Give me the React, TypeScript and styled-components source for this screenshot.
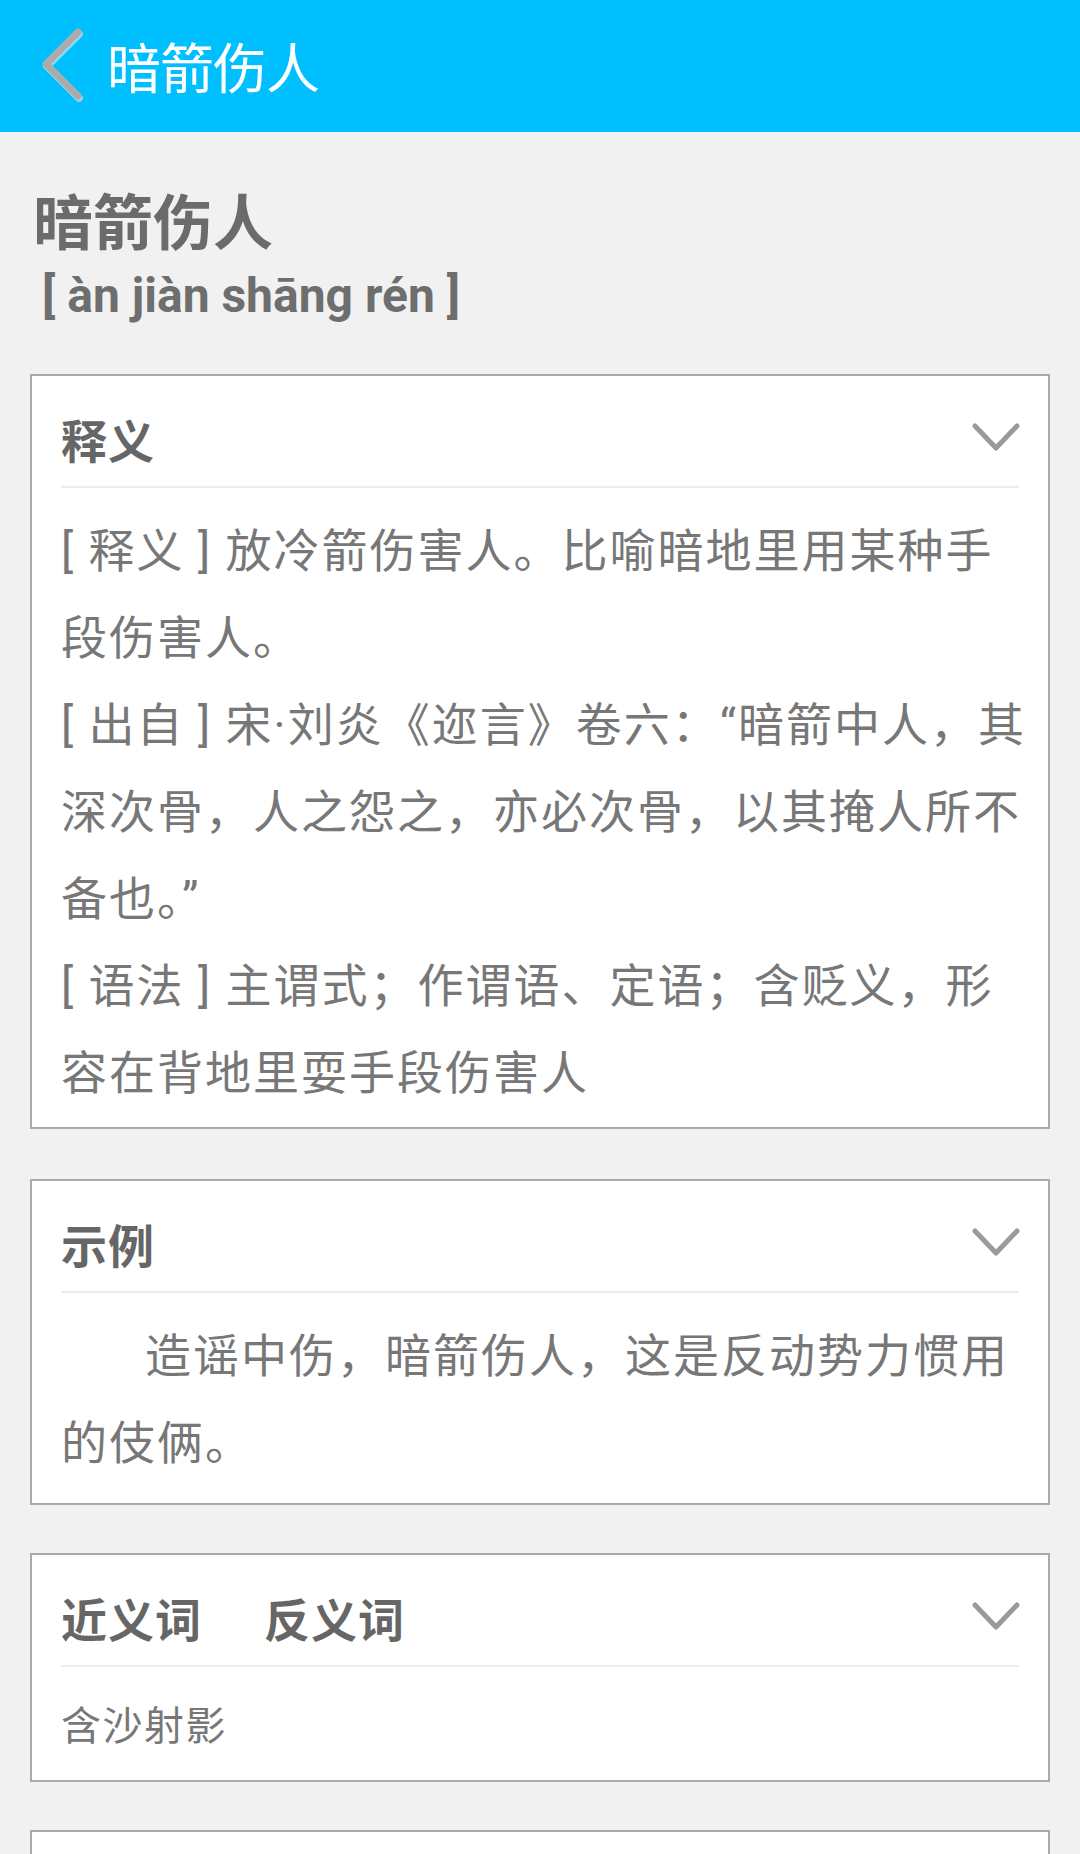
import React from "react";
import styled, { createGlobalStyle } from "styled-components";

const GlobalStyle = createGlobalStyle`
  html, body {
    margin: 0;
    padding: 0;
    background: #f1f1f1;
  }
  body {
    font-family: "Noto Sans CJK SC", "Noto Sans", sans-serif;
  }
`;

const TopBar = styled.header`
  height: 132px;
  background-color: #00bffe;
  display: flex;
  align-items: center;
  padding-left: 36px;
  gap: 21px;
`;

const BackIcon = styled.svg`
  width: 50px;
  height: 80px;
  flex-shrink: 0;
`;

const TopTitle = styled.h1`
  margin: 0;
  color: #fff;
  font-size: 54px;
  font-weight: normal;
  letter-spacing: -1px;
  line-height: 1;
`;

const Content = styled.main`
  padding: 0 30px 40px;
`;

const Intro = styled.div`
  padding: 50px 0 0 3px;
`;

const Word = styled.h2`
  margin: 0;
  color: #6b6b6b;
  font-size: 60px;
  font-weight: bold;
  line-height: 74px;
`;

const Pinyin = styled.div`
  margin: 12px 0 0 9px;
  color: #6e6e6e;
  font-family: Roboto, "Noto Sans", sans-serif;
  font-weight: bold;
  font-size: 48px;
  line-height: 56px;
`;

const Card = styled.section<{ $gap?: number }>`
  margin-top: ${(p) => p.$gap ?? 50}px;
  background: #fff;
  border: 2px solid #aaa;
`;

const CardHead = styled.div`
  margin: 14px 29px 0;
  height: 96px;
  display: flex;
  align-items: center;
  justify-content: space-between;
  border-bottom: 2px solid #ececec;
`;

const Tabs = styled.div`
  display: flex;
  gap: 62px;
`;

const CardTitle = styled.h3`
  margin: 0;
  color: #666;
  font-size: 46px;
  font-weight: bold;
  letter-spacing: 1px;
`;

const Chevron = styled.svg`
  width: 50px;
  height: 32px;
  margin-right: -3px;
`;

const CardBody = styled.div<{ $small?: boolean; $bottom?: number }>`
  padding: 20px 14px ${(p) => p.$bottom ?? 10}px 29px;
  color: #777;
  font-family: Roboto, "Noto Sans CJK SC", sans-serif;
  font-size: ${(p) => (p.$small ? "40px" : "46px")};
  letter-spacing: ${(p) => (p.$small ? "1.5px" : "2px")};
  line-height: ${(p) => (p.$small ? "80px" : "87px")};
`;

const Para = styled.p<{ $indent?: boolean }>`
  margin: 0;
  text-indent: ${(p) => (p.$indent ? "84px" : "0")};
`;

function DownArrow() {
  return (
    <Chevron viewBox="0 0 50 32">
      <polyline
        points="3,4 24,26 45,4"
        fill="none"
        stroke="#9a9a9a"
        strokeWidth="5"
        strokeLinecap="round"
        strokeLinejoin="round"
      />
    </Chevron>
  );
}

export default function App() {
  return (
    <>
      <GlobalStyle />
      <TopBar>
        <BackIcon viewBox="0 0 50 80">
          <polyline
            points="42,6 10,38 42,70"
            fill="none"
            stroke="#8fd6ee"
            strokeWidth="8"
            strokeLinecap="round"
            strokeLinejoin="round"
            transform="translate(1,2)"
          />
          <polyline
            points="42,6 10,38 42,70"
            fill="none"
            stroke="#ababab"
            strokeWidth="7"
            strokeLinecap="round"
            strokeLinejoin="round"
          />
        </BackIcon>
        <TopTitle>暗箭伤人</TopTitle>
      </TopBar>
      <Content>
        <Intro>
          <Word>暗箭伤人</Word>
          <Pinyin>[ àn jiàn shāng rén ]</Pinyin>
        </Intro>

        <Card>
          <CardHead>
            <CardTitle>释义</CardTitle>
            <DownArrow />
          </CardHead>
          <CardBody>
            <Para>[ 释义 ] 放冷箭伤害人。比喻暗地里用某种手段伤害人。</Para>
            <Para>[ 出自 ] 宋·刘炎《迩言》卷六：“暗箭中人，其深次骨，人之怨之，亦必次骨，以其掩人所不备也。”</Para>
            <Para>[ 语法 ] 主谓式；作谓语、定语；含贬义，形容在背地里耍手段伤害人</Para>
          </CardBody>
        </Card>

        <Card>
          <CardHead>
            <CardTitle>示例</CardTitle>
            <DownArrow />
          </CardHead>
          <CardBody $bottom={16}>
            <Para $indent>造谣中伤，暗箭伤人，这是反动势力惯用的伎俩。</Para>
          </CardBody>
        </Card>

        <Card $gap={48}>
          <CardHead>
            <Tabs>
              <CardTitle>近义词</CardTitle>
              <CardTitle>反义词</CardTitle>
            </Tabs>
            <DownArrow />
          </CardHead>
          <CardBody $small $bottom={13}>
            <Para>含沙射影</Para>
          </CardBody>
        </Card>

        <Card $gap={48}>
          <CardHead />
        </Card>
      </Content>
    </>
  );
}
